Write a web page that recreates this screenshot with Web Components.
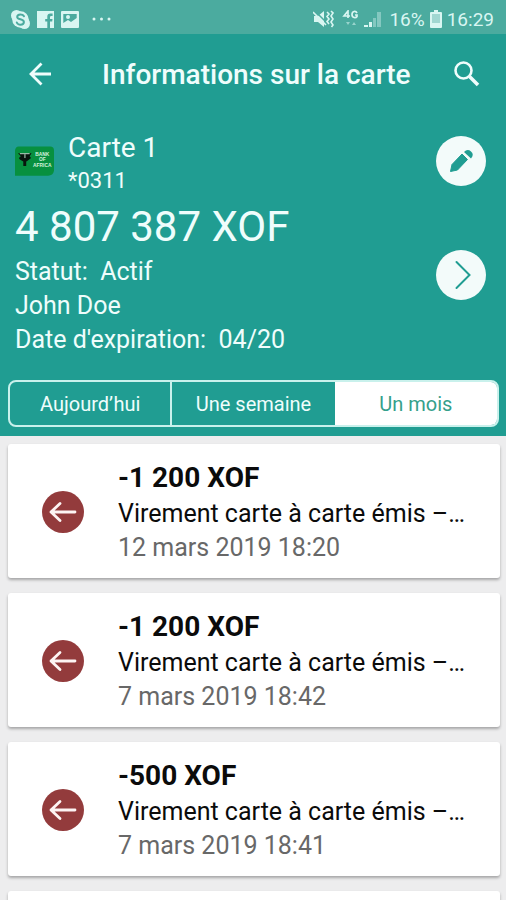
<!DOCTYPE html>
<html lang="fr">
<head>
<meta charset="utf-8">
<meta name="viewport" content="width=device-width, initial-scale=1">
<title>Informations sur la carte</title>
<style>
  body { margin: 0; font-family: Roboto, "Liberation Sans", sans-serif; background: #ededee; --teal: #209d92; --light: #effdfc; }
</style>
</head>
<body>
<card-page></card-page>
<script>
const define = (name, html) => {
  const template = document.createElement('template');
  template.innerHTML = html;
  customElements.define(name, class extends HTMLElement {
    constructor() {
      super();
      this.attachShadow({ mode: 'open' }).append(template.content.cloneNode(true));
    }
  });
};

define('status-bar', `
<style>
  :host { display: flex; align-items: center; justify-content: space-between; height: 34px; padding: 4px 12px 0 11px; box-sizing: border-box; background: #4bab9f; color: #d9f6f2; font-size: 19px; }
  div { display: flex; align-items: center; }
  svg { display: block; fill: currentColor; }
  .left { gap: 7px; }
  .right { gap: 5px; }
</style>
<div class="left">
  <svg width="19" height="19" viewBox="0 0 19 19" aria-label="Skype"><circle cx="5.5" cy="5.5" r="5.5"/><circle cx="13.5" cy="13.5" r="5.5"/><circle cx="9.5" cy="9.5" r="8.3"/><path d="M13 6.2C12.200 4.800 10.900 4.400 9.400 4.400 7.500 4.400 6.200 5.300 6.200 6.900 6.200 10 12.900 8.600 12.900 12 12.900 13.700 11.400 14.700 9.500 14.700 7.800 14.700 6.400 14 5.800 12.500" fill="none" stroke="#4bab9f" stroke-width="2" stroke-linecap="round"/></svg>
  <svg width="17" height="17" viewBox="0 0 17 17" aria-label="Facebook"><path fill-rule="evenodd" d="M0 0H17V17H13V10.500H15.200L15.500 8H13V6.200Q13 5 14.200 5H15.600V2.600H13.400Q10.300 2.600 10.300 5.700V8H8.200V10.500H10.300V17H0Z"/></svg>
  <svg width="18" height="17" viewBox="0 0 18 17" aria-label="Image"><path fill-rule="evenodd" d="M1 0H17Q18 0 18 1V16Q18 17 17 17H1Q0 17 0 16V1Q0 0 1 0ZM2.300 3V12L7 9 10 11 15.700 7V3Z"/><circle cx="7" cy="6" r="2"/></svg>
  <svg width="26" height="4" viewBox="0 0 26 4" aria-label="Plus"><circle cx="8" cy="2" r="1.500"/><circle cx="15.500" cy="2" r="1.500"/><circle cx="23" cy="2" r="1.500"/></svg>
</div>
<div class="right">
  <svg width="21" height="18" viewBox="0 0 21 18" aria-label="Muet"><path d="M1 6H5L11 1V17L5 12H1Z"/><path d="M2 1L14 13" stroke="#4bab9f" stroke-width="1.500"/><path d="M0 2L13 15M14 2l2 2-2 2.500 2 2.500-2 2.500 2 2.500M18 1l2 2-2 3 2 3-2 3 2 3-1.500 2" fill="none" stroke="currentColor" stroke-width="1.600"/></svg>
  <svg width="20" height="18" viewBox="-4 0 20 18" aria-label="4G"><path d="M5 8V1L1 6H7M14 3Q13 1 11 1.500T9 4.500 11 7.500 14 6.500V5H12" fill="none" stroke="currentColor" stroke-width="1.700"/><path d="M3 12H7L5 15ZM9 15H13L11 12Z" opacity=".55"/></svg>
  <svg width="20" height="18" viewBox="0 0 20 18" aria-label="Signal"><path d="M0 15H4V17H0ZM5 12H8V17H5Z"/><path d="M9 8H12V17H9ZM13 2H17V17H13Z" opacity=".4"/></svg>
  <span>16%</span>
  <svg width="12" height="18" viewBox="0 0 12 18" aria-label="Batterie"><path d="M4 0H8V2H11Q12 2 12 3V17Q12 18 11 18H1Q0 18 0 17V3Q0 2 1 2H4Z"/><path d="M2 4H10V13H2Z" fill="#4bab9f" opacity=".4"/></svg>
  <span>16:29</span>
</div>`);

define('app-bar', `
<style>
  :host { display: flex; align-items: center; height: 82px; padding: 0 24px; box-sizing: border-box; color: var(--light); }
  button { display: block; padding: 0; border: 0; background: none; color: inherit; }
  svg { display: block; }
  h1 { flex: 1; margin: 0 0 0 46px; font-size: 28px; line-height: 34px; font-weight: 500; white-space: nowrap; }
</style>
<button aria-label="Retour"><svg width="32" height="32" viewBox="0 0 32 32" fill="none" stroke="currentColor" stroke-width="2.800"><path d="M27 15H7M17.500 4.500L7 15L17.500 25.500"/></svg></button>
<h1><slot></slot></h1>
<button aria-label="Rechercher"><svg width="32" height="32" viewBox="0 0 32 32" fill="none" stroke="currentColor" stroke-width="2.600"><circle cx="13.500" cy="11.500" r="8"/><path d="M19.500 17.500L28 26" stroke-width="3.600"/></svg></button>`);

define('round-button', `
<style>
  :host { display: block; }
  button { display: grid; place-items: center; width: 50px; height: 50px; padding: 0; border: 0; border-radius: 50%; background: #f3fbfa; color: var(--teal); }
</style>
<button><slot></slot></button>`);

define('bank-logo', `
<style>:host { display: block; } svg { display: block; }</style>
<svg width="39" height="30" viewBox="0 0 40 30" role="img" aria-label="Bank of Africa">
  <path d="M4 0H36Q40 0 40 4V25Q39 30 34 30H0V5Q0 0 4 0Z" fill="#07903f"/>
  <path d="M3 7H17L15 10 16.500 12 12.500 15 11.500 15.500V20H8.500V15.500L5 13.500 4 12 6 10Z" fill="#08150d"/>
  <path d="M5 7.500H15M10.200 8V12" stroke="#bfe0cd" stroke-width="1"/>
  <g fill="#d5f2df" font-family="Liberation Sans, sans-serif" font-weight="700" font-size="5" text-anchor="middle"><text x="28" y="10">BANK</text><text x="28" y="15.500">OF</text><text x="28" y="21">AFRICA</text></g>
</svg>`);

define('card-summary', `
<style>
  :host { display: flex; justify-content: space-between; padding: 15px 20px 0 15px; color: var(--light); }
  .id { display: flex; align-items: center; gap: 14px; }
  bank-logo { margin-bottom: 6px; }
  h2, p { margin: 0; font-weight: 400; }
  h2 { font-size: 28px; line-height: 34px; }
  .num { font-size: 22px; line-height: 32px; }
  .sum { margin-top: 2px; font-size: 42px; line-height: 56px; }
  .row { font-size: 25px; line-height: 34px; white-space: pre; }
  .actions { display: flex; flex-direction: column; gap: 64px; padding-top: 5px; }
</style>
<div>
  <div class="id"><bank-logo></bank-logo><div><h2>Carte 1</h2><p class="num">*0311</p></div></div>
  <p class="sum">4 807 387 XOF</p>
  <p class="row">Statut:  Actif</p>
  <p class="row">John Doe</p>
  <p class="row">Date d'expiration:  04/20</p>
</div>
<div class="actions">
  <round-button><svg width="30" height="30" viewBox="0 0 30 30" fill="currentColor" role="img" aria-label="Modifier"><path d="M4.500 25.500L6 18.500 16 8 21.500 13.500 11.500 24Z" stroke="currentColor" stroke-linejoin="round"/><path d="M18 6Q21.500 2.500 25 5.500T25 12.500Z"/></svg></round-button>
  <round-button><svg width="30" height="30" viewBox="0 0 30 30" fill="none" stroke="currentColor" stroke-width="2" stroke-linecap="round" role="img" aria-label="Suivant"><path d="M10.500 2L23.500 15L10.500 28"/></svg></round-button>
</div>`);

define('period-tabs', `
<style>
  :host { display: grid; grid-template-columns: repeat(3, 1fr); margin: 23px 7px 9px 8px; border: 2px solid #c9f1ec; border-radius: 8px; overflow: hidden; }
  button { height: 43px; padding: 0; border: 0; background: none; color: var(--light); font: 400 20px/24px Roboto, sans-serif; }
  button:first-of-type { border-right: 2px solid #c9f1ec; }
  button[aria-pressed="true"] { background: #fff; color: #35a08b; }
</style>
<button aria-pressed="false">Aujourd’hui</button>
<button aria-pressed="false">Une semaine</button>
<button aria-pressed="true">Un mois</button>`);

define('transaction-card', `
<style>
  :host { display: flex; align-items: center; gap: 34px; flex: none; min-height: 134px; padding: 15px 28px 13px 34px; box-sizing: border-box; border-radius: 3px; background: #fff; box-shadow: 0 2px 3px #0000004d; color: #0b0b0b; }
  svg { display: block; flex: none; }
  .text { flex: 1; min-width: 0; font-size: 25px; line-height: 34px; white-space: nowrap; }
  .text > div { overflow: hidden; text-overflow: ellipsis; }
  .amount { font-size: 28px; line-height: 38px; font-weight: 700; }
  .date { color: #686868; }
</style>
<svg width="42" height="42" viewBox="0 0 42 42" role="img" aria-label="Débit"><circle cx="21" cy="21" r="21" fill="#933b3c"/><path d="M33 21H9M18 12.500L9 21L18 29.500" fill="none" stroke="#fdf4f3" stroke-width="2.800" stroke-linecap="round" stroke-linejoin="round"/></svg>
<div class="text"><div class="amount"><slot name="amount"></slot></div><div><slot></slot></div><div class="date"><slot name="date"></slot></div></div>`);

define('card-page', `
<style>
  :host { display: flex; flex-direction: column; height: 100vh; }
  header { background: var(--teal); display: flow-root; }
  main { flex: 1; min-height: 0; overflow-y: auto; scrollbar-width: none; display: flex; flex-direction: column; gap: 15px; padding: 8px 6px 15px 8px; }
</style>
<status-bar></status-bar>
<header>
  <app-bar>Informations sur la carte</app-bar>
  <card-summary></card-summary>
  <period-tabs></period-tabs>
</header>
<main>
  <transaction-card><span slot="amount">-1 200 XOF</span>Virement carte à carte émis –…<time slot="date">12 mars 2019 18:20</time></transaction-card>
  <transaction-card><span slot="amount">-1 200 XOF</span>Virement carte à carte émis –…<time slot="date">7 mars 2019 18:42</time></transaction-card>
  <transaction-card><span slot="amount">-500 XOF</span>Virement carte à carte émis –…<time slot="date">7 mars 2019 18:41</time></transaction-card>
  <transaction-card></transaction-card>
</main>`);
</script>
</body>
</html>
